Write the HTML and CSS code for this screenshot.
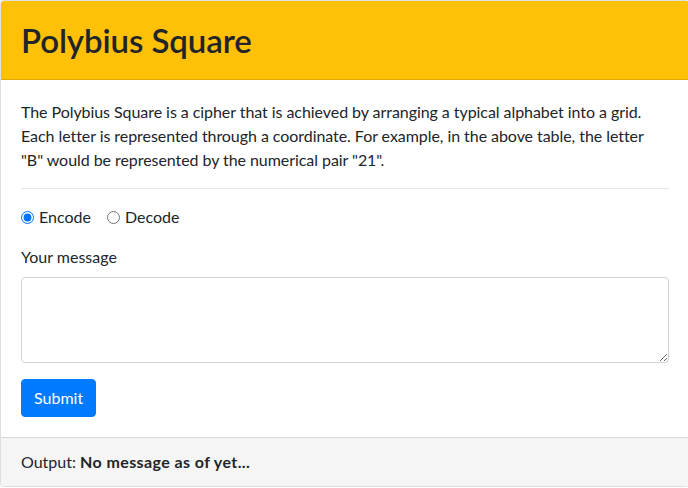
FILE: index.html
```html
<!DOCTYPE html>
<html lang="en">
<head>
<meta charset="utf-8">
<title>Polybius Square</title>
<link rel="stylesheet" href="styles.css">
</head>
<body>
<div class="card">
  <div class="card-header">
    <h1 class="title">Polybius Square</h1>
  </div>
  <div class="card-body">
    <p class="intro">The Polybius Square is a cipher that is achieved by arranging a typical alphabet into a grid. Each letter is represented through a coordinate. For example, in the above table, the letter "B" would be represented by the numerical pair "21".</p>
    <hr class="divider">
    <form class="form">
      <div class="form-group radios">
        <label class="form-check"><input type="radio" name="mode" class="radio" checked> Encode</label>
        <label class="form-check"><input type="radio" name="mode" class="radio"> Decode</label>
      </div>
      <div class="form-group">
        <label class="field-label" for="msg">Your message</label>
        <textarea id="msg" class="textarea" rows="3"></textarea>
      </div>
      <button type="button" class="btn">Submit</button>
    </form>
  </div>
  <div class="card-footer">Output: <b class="out">No message as of yet...</b></div>
</div>
</body>
</html>
```
FILE: styles.css
```css
html, body {
  margin: 0;
  padding: 0;
  overflow: hidden;
  background: #fff;
}
body {
  font-family: "Lato", "Noto Sans", sans-serif;
  font-size: 16px;
  line-height: 24px;
  color: #212529;
}
.card {
  width: 690px;
  box-sizing: border-box;
  border: 1px solid rgba(0,0,0,.125);
  border-radius: 4px;
  display: flex;
  flex-direction: column;
  overflow: hidden;
}
.card-header {
  background: #ffc107;
  border-bottom: 1px solid rgba(0,0,0,.125);
  padding: 12px 20px;
  height: 54px;
  display: flex;
  align-items: center;
}
.title {
  margin: 0;
  font-size: 33px;
  line-height: 40px;
  font-weight: 600;
  color: #212529;
  letter-spacing: -0.1px;
}
.card-body {
  padding: 20px;
}
.intro {
  margin: 0 0 16px;
  letter-spacing: -0.06px;
}
.divider {
  margin: 16px 0;
  border: 0;
  border-top: 1px solid rgba(0,0,0,.1);
  height: 0;
}
.form { margin: 0; }
.form-group { margin-bottom: 16px; }
.radios { display: flex; height: 24px; align-items: center; }
.form-check {
  display: inline-flex;
  align-items: center;
  margin-right: 16px;
}
.radio {
  margin: 0 5px 0 0;
  width: 13px;
  height: 13px;
}
.field-label {
  display: block;
  margin-bottom: 8px;
}
.textarea {
  display: block;
  width: 100%;
  box-sizing: border-box;
  height: 86px;
  padding: 6px 12px;
  font: inherit;
  border: 1px solid #ced4da;
  border-radius: 4px;
  resize: vertical;
}
.btn {
  display: block;
  background: #007bff;
  color: #fff;
  border: 1px solid #007bff;
  border-radius: 4px;
  padding: 6px 12px;
  font: inherit;
  line-height: 24px;
  cursor: pointer;
}
.card-footer {
  background: #f5f5f5;
  border-top: 1px solid rgba(0,0,0,.125);
  padding: 12px 20px;
}
.out { font-weight: 700; letter-spacing: 0.4px; }
```
